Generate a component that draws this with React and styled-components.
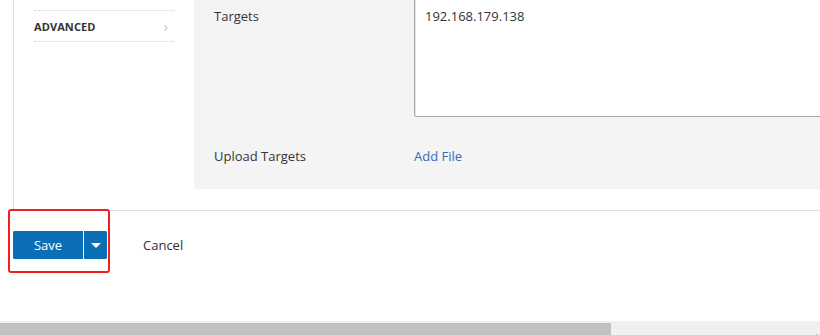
import React from "react";
import styled, { createGlobalStyle } from "styled-components";

const textColor = "#333333";
const lineColor = "#dddddd";
const panelColor = "#f4f4f4";
const blue = "#0b6fb8";

const GlobalStyle = createGlobalStyle`
    html, body {
        margin: 0;
        padding: 0;
        background: #ffffff;
        overflow: hidden;
    }
    body {
        font-family: "Open Sans", "Liberation Sans", Arial, sans-serif;
        font-size: 13px;
        color: ${textColor};
    }
`;

const Page = styled.div`
    width: 820px;
    height: 335px;
    display: flex;
    flex-direction: column;
    overflow: hidden;
`;

const Main = styled.div`
    flex: 1;
    padding-left: 13px;
    display: flex;
    flex-direction: column;
`;

const FormWrap = styled.div`
    height: 210px;
    display: flex;
    border-left: 1px solid ${lineColor};
    border-bottom: 1px solid ${lineColor};
`;

const Sidebar = styled.nav`
    width: 160px;
    flex-shrink: 0;
    padding: 10px 0 0 20px;
`;

const NavItem = styled.div`
    width: 140px;
    height: 32px;
    box-sizing: border-box;
    padding-top: 1px;
    display: flex;
    align-items: center;
    justify-content: space-between;
    border-top: 1px dotted #cfcfcf;
    border-bottom: 1px dotted #cfcfcf;
    font-size: 11px;
    font-weight: 700;
    letter-spacing: 0.1px;
    text-transform: uppercase;
    color: ${textColor};
`;

const Chevron = styled.span`
    color: #c2c2c2;
    font-size: 14px;
    font-weight: 400;
    margin-right: 6px;
`;

const Panel = styled.section`
    flex: 1;
    min-width: 0;
    height: 199px;
    margin-top: -10px;
    padding: 0 0 24px 20px;
    box-sizing: border-box;
    background: ${panelColor};
    display: flex;
    flex-direction: column;
`;

const Row = styled.div`
    display: grid;
    grid-template-columns: 200px 1fr;
    margin-top: ${(p) => p.$gap || 0}px;
    line-height: 18px;
`;

const Label = styled.div`
    padding-top: ${(p) => p.$top || 0}px;
    color: ${textColor};
`;

const TargetsBox = styled.textarea`
    width: 640px;
    height: 127px;
    box-sizing: border-box;
    margin: 0;
    padding: 16px 10px;
    border: 1px solid #a8a8a8;
    border-radius: 2px;
    box-shadow: inset 1px 1px 0 #e6e6e6;
    background: #ffffff;
    font-family: inherit;
    font-size: 13px;
    line-height: 18px;
    color: ${textColor};
    resize: none;
    outline: none;
`;

const Link = styled.a`
    color: #2d6db5;
    text-decoration: none;
    cursor: pointer;
`;

const Footer = styled.div`
    position: relative;
    display: flex;
    align-items: center;
    gap: 36px;
    padding-top: 20px;
`;

const SplitButton = styled.div`
    display: flex;
    height: 28px;
    border-radius: 2px;
    overflow: hidden;
    background: ${blue};
`;

const SaveButton = styled.button`
    width: 70px;
    height: 28px;
    border: 0;
    padding: 0;
    background: ${blue};
    color: #ffffff;
    font-family: inherit;
    font-size: 13px;
    cursor: pointer;
`;

const CaretButton = styled.button`
    width: 24px;
    height: 28px;
    border: 0;
    border-left: 1px solid #ffffff;
    padding: 0;
    background: ${blue};
    display: flex;
    align-items: center;
    justify-content: center;
    cursor: pointer;

    &::after {
        content: "";
        border-left: 5px solid transparent;
        border-right: 5px solid transparent;
        border-top: 5px solid #ffffff;
    }
`;

const CancelButton = styled.button`
    border: 0;
    padding: 0;
    background: none;
    color: ${textColor};
    font-family: inherit;
    font-size: 13px;
    cursor: pointer;
`;

const Highlight = styled.div`
    position: absolute;
    left: -5px;
    top: -2px;
    width: 102px;
    height: 64px;
    box-sizing: border-box;
    border: 2px solid #f21f1f;
    border-radius: 3px;
    pointer-events: none;
`;

const ScrollTrack = styled.div`
    height: 17px;
    flex-shrink: 0;
    display: flex;
    align-items: flex-start;
    background: #f0f0f0;
    margin-bottom: -3px;
`;

const ScrollThumb = styled.div`
    width: 611px;
    height: 13px;
    margin-top: 2px;
    background: #c1c1c1;
`;

const ScrollArrow = styled.div`
    margin-left: auto;
    margin-right: 0;
    margin-top: 13px;
    width: 0;
    height: 0;
    border-top: 4px solid transparent;
    border-bottom: 4px solid transparent;
    border-left: 4px solid #505050;
`;

const App = () => {
    return (
        <Page>
            <GlobalStyle />
            <Main>
                <FormWrap>
                    <Sidebar>
                        <NavItem>
                            Advanced
                            <Chevron>›</Chevron>
                        </NavItem>
                    </Sidebar>
                    <Panel>
                        <Row>
                            <Label $top={17}>Targets</Label>
                            <TargetsBox readOnly defaultValue="192.168.179.138" />
                        </Row>
                        <Row $gap={30}>
                            <Label>Upload Targets</Label>
                            <div>
                                <Link>Add File</Link>
                            </div>
                        </Row>
                    </Panel>
                </FormWrap>
                <Footer>
                    <SplitButton>
                        <SaveButton>Save</SaveButton>
                        <CaretButton aria-label="More save options" />
                    </SplitButton>
                    <CancelButton>Cancel</CancelButton>
                    <Highlight />
                </Footer>
            </Main>
            <ScrollTrack>
                <ScrollThumb />
                <ScrollArrow />
            </ScrollTrack>
        </Page>
    );
};

export default App;
